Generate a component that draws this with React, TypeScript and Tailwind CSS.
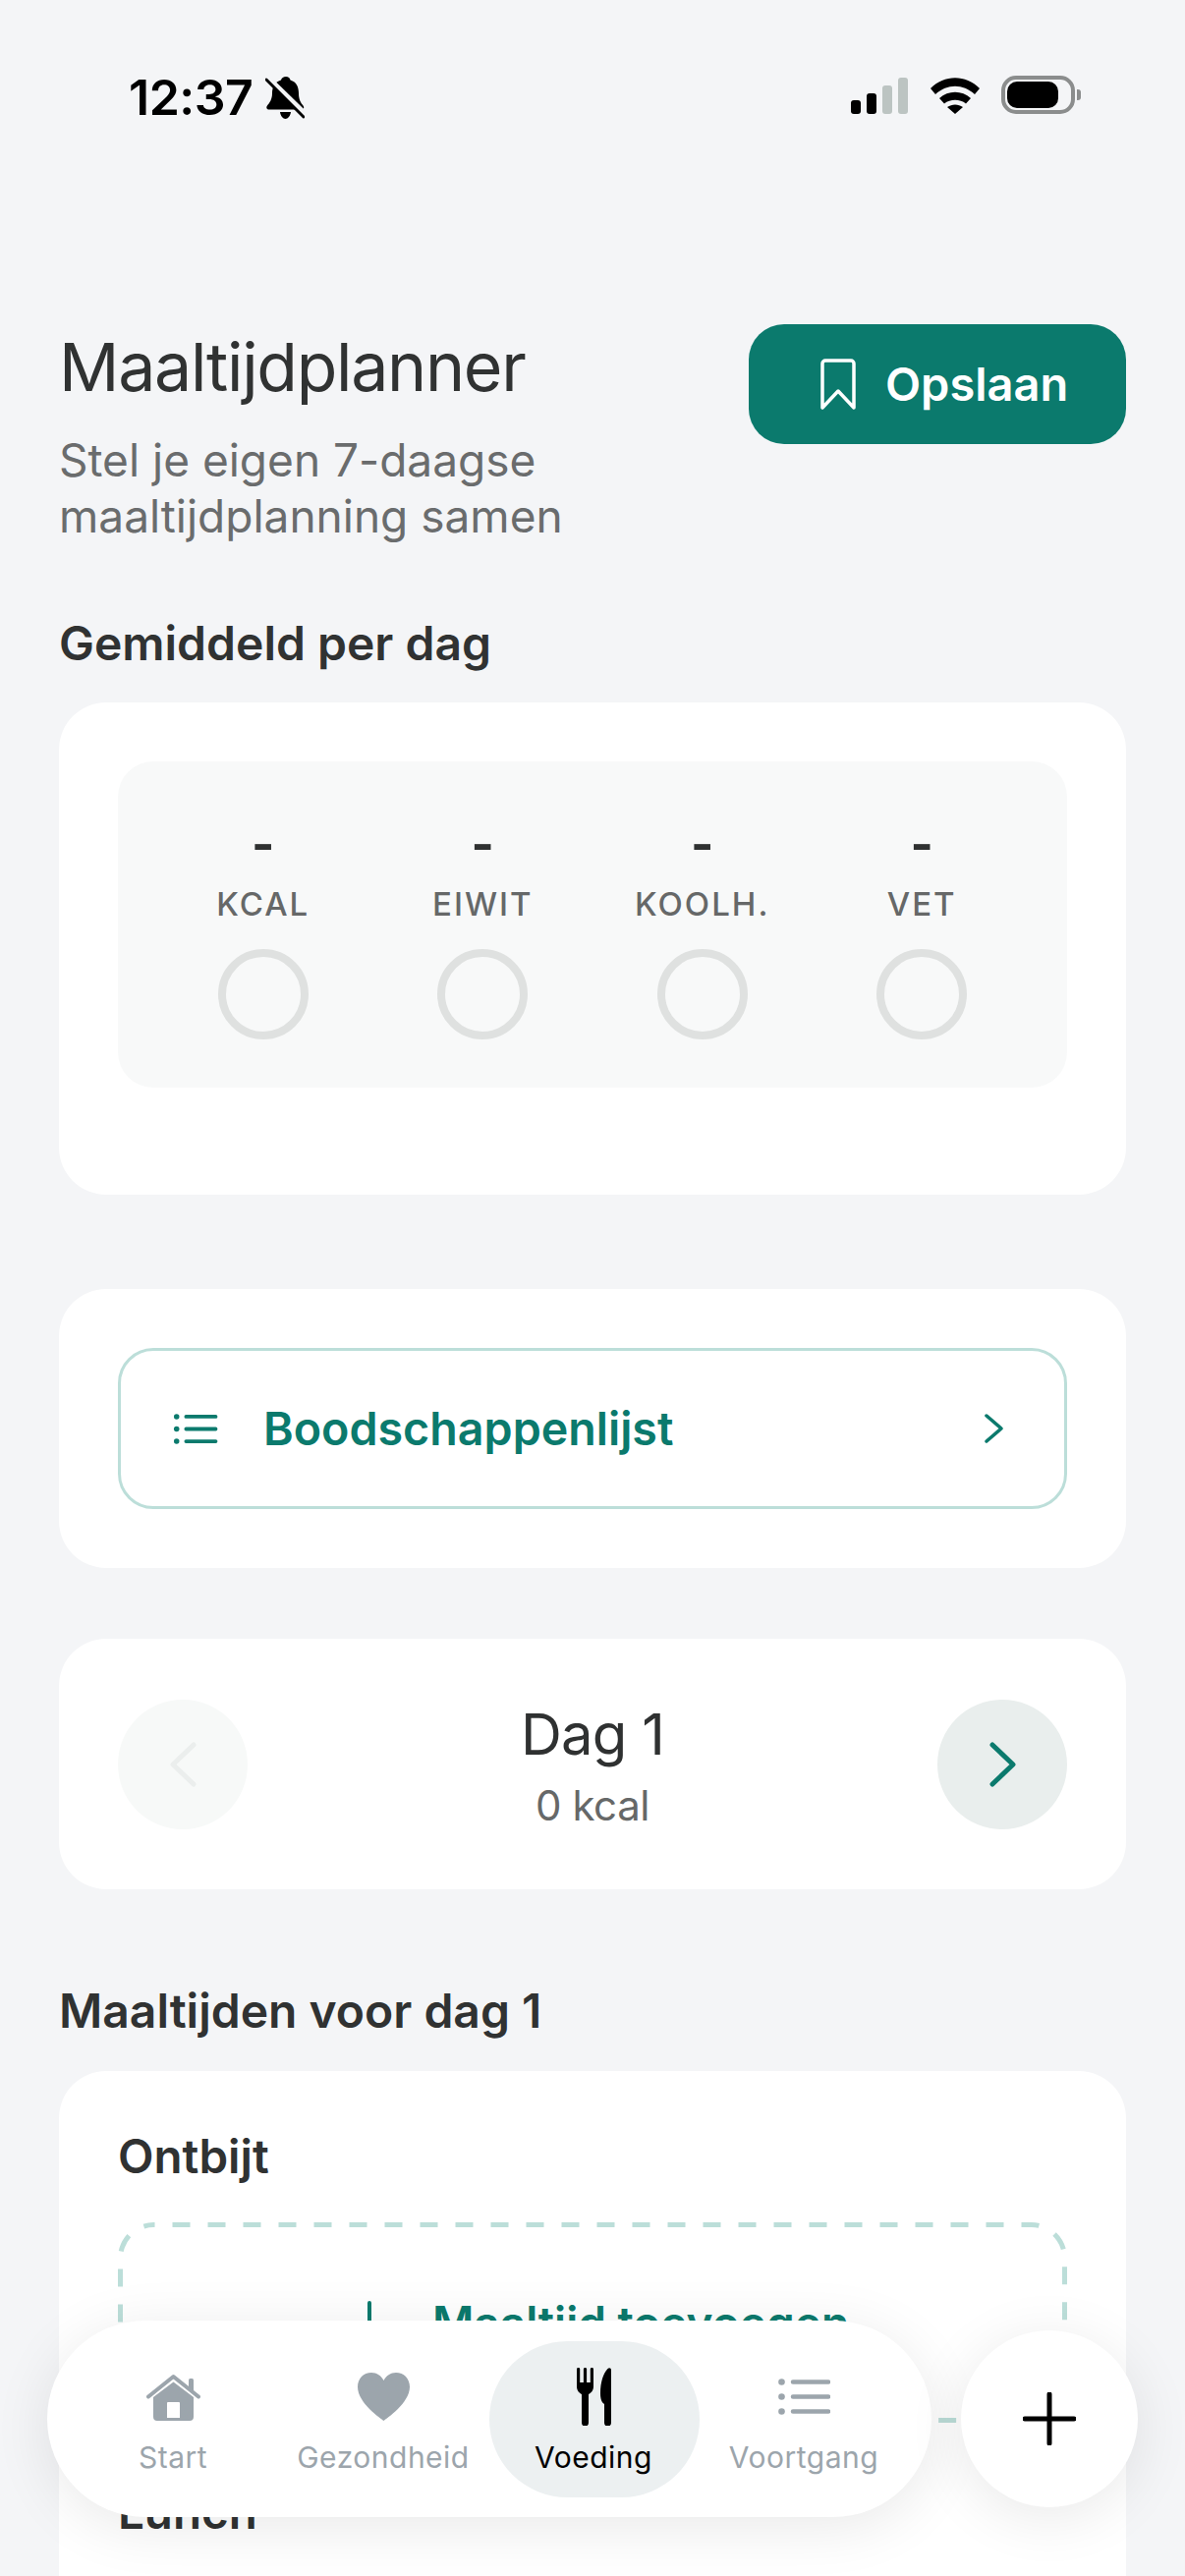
const ListIcon = ({ className }: { className?: string }) => (
  <svg viewBox="0 0 53 37" className={className} fill="none">
    <circle cx="3.5" cy="3.5" r="3.3" fill="currentColor" />
    <circle cx="3.5" cy="18.5" r="3.3" fill="currentColor" />
    <circle cx="3.5" cy="33.5" r="3.3" fill="currentColor" />
    <path d="M15 3.5H51M15 18.5H51M15 33.5H51" stroke="currentColor" strokeWidth="4.5" strokeLinecap="round" />
  </svg>
)

const HomeIcon = () => (
  <svg viewBox="0 0 55 48" className="h-[48px] w-[55px] text-[#9ca5ac]" fill="none">
    <path d="M43 17V6.5a1.5 1.5 0 0 1 1.5-1.5h2A1.5 1.5 0 0 1 48 6.5V21z" fill="currentColor" />
    <path d="M2 23.5 27.5 3 53 23.5" stroke="currentColor" strokeWidth="4" strokeLinecap="round" strokeLinejoin="round" />
    <path
      d="M7 24 27.5 8.5 48 24v20a4 4 0 0 1-4 4H11a4 4 0 0 1-4-4zM21 30v15h13V30a1 1 0 0 0-1-1H22a1 1 0 0 0-1 1z"
      fill="currentColor"
      fillRule="evenodd"
    />
  </svg>
)

const HeartIcon = () => (
  <svg viewBox="0 0 53 49" className="h-[49px] w-[53px] text-[#9ca5ac]">
    <path
      d="M26.5 49C24 47 0 31 0 14.5 0 6 6 0 14 0c5.500 0 10 3 12.500 8C29 3 33.500 0 39 0c8 0 14 6 14 14.500C53 31 29 47 26.500 49z"
      fill="currentColor"
    />
  </svg>
)

const ForkKnifeIcon = () => (
  <svg viewBox="0 0 35 59" className="h-[59px] w-[35px] text-black" fill="currentColor">
    <rect x="0" y="0" width="3.2" height="20" rx="1.4" />
    <rect x="6.900" y="0" width="3.200" height="20" rx="1.400" />
    <rect x="13.800" y="0" width="3.200" height="20" rx="1.400" />
    <path d="M0 15h17v4c0 4.500-2.500 6.500-5 8v29a3.500 3.500 0 0 1-7 0V27c-2.500-1.500-5-3.500-5-8z" />
    <path d="M35 2.500c0-2.300-2-3-3.500-1.500C27 5.500 24 15 24 26c0 6 1.500 9.500 4 11v19a3.500 3.500 0 0 0 7 0z" />
  </svg>
)

const NAV_ITEMS = [
  { label: "Start", icon: <HomeIcon /> },
  { label: "Gezondheid", icon: <HeartIcon /> },
  { label: "Voeding", icon: <ForkKnifeIcon />, active: true },
  { label: "Voortgang", icon: <ListIcon className="h-[37px] w-[53px] text-[#9ca5ac]" /> },
]

const MACROS = ["KCAL", "EIWIT", "KOOLH.", "VET"]

function StatusBar() {
  return (
    <div className="flex h-[120px] items-start justify-between pl-[131px] pr-[106px] pt-[77px]">
      <div className="flex items-center">
        <span className="text-[50px] leading-[44px] font-semibold tracking-[-0.5px] text-black">12:37</span>
        <svg viewBox="0 0 40 43" className="ml-[13px] h-[43px] w-[40px]">
          <path
            d="M21 0c2.500 0 4 1.500 4.500 3.500C32 5.500 34 11 34 17c0 6 2 9.500 4.500 12.500 1.500 2 .5 4-2 4H4c-2.500 0-3.500-2-2-4C4.500 26.500 7 23 7 17c0-6 2.500-11.500 9-13.500C16.500 1.500 18.500 0 21 0zM15 36h11c-.5 4-3 7-5.500 7S15.500 40 15 36z"
            fill="#000"
          />
          <path d="M-2 -3 38 36" stroke="#f4f5f7" strokeWidth="6" />
          <path d="M1 3 39 41" stroke="#000" strokeWidth="3" strokeLinecap="round" />
        </svg>
      </div>
      <div className="flex items-start">
        <div className="mt-[2px] flex h-[37px] items-end gap-[6px]">
          <div className="h-[14px] w-[10px] rounded-[3px] bg-black" />
          <div className="h-[21px] w-[10px] rounded-[3px] bg-black" />
          <div className="h-[29px] w-[10px] rounded-[3px] bg-[#bcc4c2]" />
          <div className="h-[37px] w-[10px] rounded-[3px] bg-[#bcc4c2]" />
        </div>
        <svg viewBox="0 0 50 37" className="ml-[23px] mt-[2px] h-[37px] w-[50px]" fill="#000">
          <path d="M0 11C14-3.500 36-3.500 50 11l-5 6C33 6 17 6 5 17z" />
          <path d="M9 21c9-8.500 23-8.500 32 0l-5 5.500c-6-5-16-5-22 0z" />
          <path d="M17 30c5-3.500 11-3.500 16 0l-8 7z" />
        </svg>
        <div className="ml-[22px] flex items-center">
          <div className="h-[39px] w-[75px] rounded-[15px] border-[4px] border-[#8b8d8d] p-[2px]">
            <div className="h-full w-[52px] rounded-[10px] bg-black" />
          </div>
          <div className="ml-[2px] h-[11px] w-[4px] rounded-r-[3px] bg-[#8b8d8d]" />
        </div>
      </div>
    </div>
  )
}

function MacroColumn({ label }: { label: string }) {
  return (
    <div className="flex flex-col items-center">
      <span className="h-[60px] text-[50px] leading-[60px] font-bold text-[#2f3131]">-</span>
      <span className="mt-[11px] text-[33px] leading-[40px] font-medium tracking-[2px] text-[#666868]">{label}</span>
      <div className="mt-[26px] h-[92px] w-[92px] rounded-full border-[8px] border-[#dfe1e0]" />
    </div>
  )
}

function AddMeal() {
  return (
    <div className="relative mt-[39px] flex h-[204px] items-center justify-center pl-[12px]">
      <svg className="absolute inset-0 h-[204px] w-[966px]" fill="none">
        <rect
          x="2.5"
          y="2.5"
          width="961"
          height="199"
          rx="34"
          stroke="#bcded9"
          strokeWidth="5"
          strokeDasharray="18 18"
          strokeDashoffset="17"
        />
      </svg>
      <svg viewBox="0 0 44 44" className="h-[44px] w-[44px] text-[#0b7a6d]" fill="none">
        <path d="M22 2V42M2 22H42" stroke="currentColor" strokeWidth="4" strokeLinecap="round" />
      </svg>
      <span className="ml-[42px] text-[46px] leading-[56px] font-semibold text-[#0b7a6d]">Maaltijd toevoegen</span>
    </div>
  )
}

export default function App() {
  return (
    <div className="relative h-[2622px] w-[1206px] overflow-hidden bg-[#f4f5f7] font-[family-name:Inter,sans-serif]">
      <StatusBar />

      <div className="px-[60px]">
        <div className="flex items-start justify-between pt-[210px]">
          <div>
            <h1 className="mt-[3px] text-[68px] leading-[80px] font-normal tracking-[-1.3px] text-[#303232]">Maaltijdplanner</h1>
            <p className="mt-[27px] w-[580px] text-[46px] leading-[57px] font-normal text-[#6a6c6d]">
              Stel je eigen 7-daagse maaltijdplanning samen
            </p>
          </div>
          <button className="flex h-[122px] w-[384px] items-center rounded-[36px] bg-[#0b7a6d] pl-[73px]">
            <svg viewBox="0 0 36 52" className="h-[52px] w-[36px]" fill="none">
              <path d="M2 50V5a3 3 0 0 1 3-3h26a3 3 0 0 1 3 3v45L18 33z" stroke="#fff" strokeWidth="3.500" strokeLinejoin="round" />
            </svg>
            <span className="ml-[30px] text-[47px] leading-[56px] font-semibold text-white">Opslaan</span>
          </button>
        </div>

        <h2 className="mt-[73px] text-[48px] leading-[56px] font-semibold text-[#303232]">Gemiddeld per dag</h2>

        <div className="mt-[32px] rounded-[48px] bg-white px-[60px] pb-[109px] pt-[60px]">
          <div className="grid h-[332px] grid-cols-4 rounded-[36px] bg-[#f8f9f9] px-[36px] pt-[54px]">
            {MACROS.map((m) => (
              <MacroColumn key={m} label={m} />
            ))}
          </div>
        </div>

        <div className="mt-[96px] rounded-[48px] bg-white p-[60px]">
          <div className="flex h-[164px] items-center rounded-[36px] border-[3px] border-[#bcded9] pl-[51px] pr-[62px]">
            <ListIcon className="h-[31px] w-[50px] text-[#0b7a6d]" />
            <span className="ml-[44px] flex-1 text-[46.6px] leading-[56px] font-semibold text-[#0b7a6d]">Boodschappenlijst</span>
            <svg viewBox="0 0 19 30" className="h-[30px] w-[19px]" fill="none">
              <path d="M2 2 17 15 2 28" stroke="#0b7a6d" strokeWidth="3.500" strokeLinecap="round" strokeLinejoin="round" />
            </svg>
          </div>
        </div>

        <div className="mt-[72px] flex h-[255px] items-center justify-between rounded-[48px] bg-white px-[60px]">
          <div className="flex h-[132px] w-[132px] items-center justify-center rounded-full bg-[#f7f9f8]">
            <svg viewBox="0 0 27 46" className="h-[46px] w-[27px]" fill="none">
              <path d="M24 3 3 23 24 43" stroke="#ebeeed" strokeWidth="5" strokeLinecap="round" strokeLinejoin="round" />
            </svg>
          </div>
          <div className="flex flex-col items-center">
            <span className="text-[58px] leading-[70px] font-normal tracking-[-0.8px] text-[#2f3131]">Dag 1</span>
            <span className="mt-[14px] text-[42px] leading-[48px] font-normal tracking-[-0.4px] text-[#666868]">0 kcal</span>
          </div>
          <div className="flex h-[132px] w-[132px] items-center justify-center rounded-full bg-[#e9eeed]">
            <svg viewBox="0 0 27 46" className="h-[46px] w-[27px]" fill="none">
              <path d="M3 3 24 23 3 43" stroke="#0b7a6d" strokeWidth="5" strokeLinecap="round" strokeLinejoin="round" />
            </svg>
          </div>
        </div>

        <h2 className="mt-[96px] text-[48px] leading-[56px] font-semibold text-[#303232]">Maaltijden voor dag 1</h2>

        <div className="mt-[33px] rounded-[48px] bg-white px-[60px] pb-[60px] pt-[59px]">
          <h3 className="text-[47.5px] leading-[56px] font-semibold text-[#303232]">Ontbijt</h3>
          <AddMeal />
          <h3 className="mt-[63px] text-[47.5px] leading-[56px] font-semibold text-[#303232]">Lunch</h3>
          <AddMeal />
        </div>
      </div>

      <div className="absolute bottom-[60px] left-[48px] flex w-[1110px] items-center justify-between">
        <nav className="flex h-[200px] w-[900px] items-center rounded-full bg-white px-[22px] shadow-[0_10px_60px_rgba(0,0,0,0.09)]">
          {NAV_ITEMS.map((item) => (
            <div
              key={item.label}
              className={
                item.active
                  ? "flex h-[159px] w-[214px] flex-col items-center rounded-[80px] bg-[#ecf0f1] pr-[2px] pt-[27px]"
                  : "flex h-[159px] w-[214px] flex-col items-center pr-[2px] pt-[27px]"
              }
            >
              <div className="flex h-[60px] items-center justify-center">{item.icon}</div>
              <span
                className={
                  item.active
                    ? "mt-[11px] text-[30px] leading-[40px] tracking-[0.5px] text-black"
                    : "mt-[11px] text-[30px] leading-[40px] tracking-[0.5px] text-[#9ca5ac]"
                }
              >
                {item.label}
              </span>
            </div>
          ))}
        </nav>
        <button className="flex h-[180px] w-[180px] items-center justify-center rounded-full bg-white shadow-[0_10px_60px_rgba(0,0,0,0.09)]">
          <svg viewBox="0 0 54 54" className="h-[54px] w-[54px]" fill="none">
            <path d="M27 2V52M2 27H52" stroke="#000" strokeWidth="5" strokeLinecap="round" />
          </svg>
        </button>
      </div>
    </div>
  )
}
